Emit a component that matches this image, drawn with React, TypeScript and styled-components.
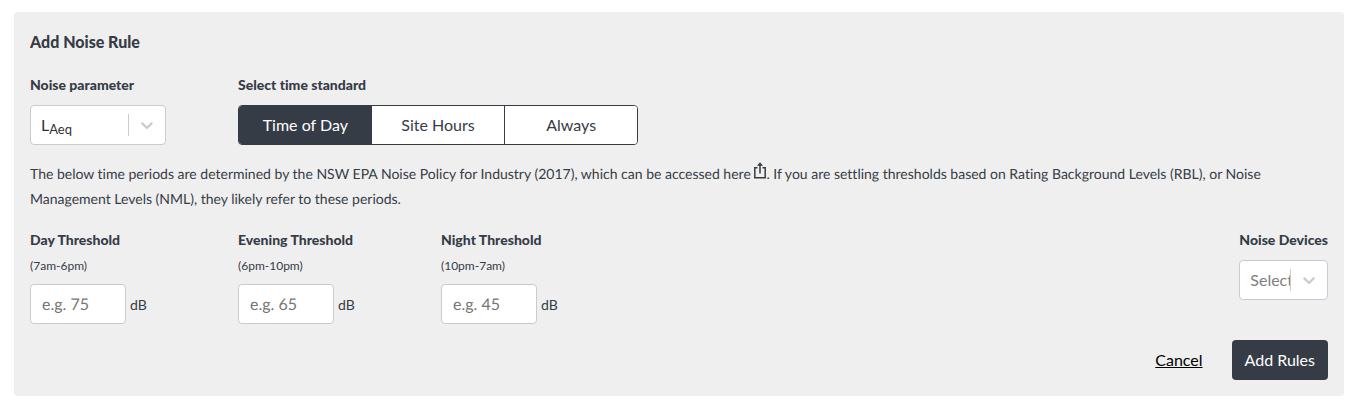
import React from "react";
import styled, { createGlobalStyle, css } from "styled-components";

const ink = "#363c46";
const line = "#c5ccd6";

const GlobalStyle = createGlobalStyle`
  *, *::before, *::after { box-sizing: border-box; }
  body {
    margin: 0;
    background: #fff;
    color: ${ink};
    font-family: Lato, "Liberation Sans", sans-serif;
    font-size: 14px;
    line-height: 25px;
    font-variant-ligatures: none;
  }
  button, input, select {
    font: inherit;
    font-size: 16px;
    line-height: 24px;
    font-variant-ligatures: none;
  }
`;

const Panel = styled.form`
  display: flex;
  flex-direction: column;
  gap: 16px;
  margin: 12px 12px 12px 14px;
  padding: 16px;
  background: #efefef;
  border-radius: 4px;
`;

const Title = styled.h2`
  margin: 0;
  font-size: 16px;
  font-weight: 900;
  line-height: 28px;
`;

const Row = styled.div`
  display: grid;
  grid-template-columns: 208px 203px 1fr auto;
`;

const Field = styled.div`
  display: flex;
  flex-direction: column;
  align-items: flex-start;
`;

const labelStyle = css`
  font-size: 14px;
  font-weight: 900;
  line-height: 25px;
`;

const Label = styled.label`
  ${labelStyle}
`;

const Group = styled.fieldset`
  grid-column: span 3;
  min-width: 0;
  margin: 0;
  padding: 0;
  border: 0;
`;

const Legend = styled.legend`
  ${labelStyle}
  padding: 0;
`;

const Hint = styled.span`
  margin-bottom: 4px;
  font-size: 12px;
  line-height: 28px;
`;

const SelectBox = styled.div<{ $minWidth: string }>`
  display: grid;
  grid-template-columns: minmax(0, 1fr) 1px 36px;
  align-items: center;
  width: 0;
  min-width: ${({ $minWidth }) => $minWidth};
  height: 40px;
  margin-top: 8px;
  background: #fff;
  border: 1px solid ${line};
  border-radius: 4px;
`;

const NativeSelect = styled.select<{ $hidden: boolean }>`
  grid-area: 1 / 1 / 2 / 4;
  width: 100%;
  min-width: 0;
  height: 38px;
  padding: 0 37px 0 10px;
  appearance: none;
  background: transparent;
  border: 0;
  border-radius: 4px;
  color: ${({ $hidden }) => ($hidden ? "transparent" : "#808080")};
  text-overflow: clip;
`;

const SelectValue = styled.span`
  grid-area: 1 / 1;
  padding-left: 10px;
  color: #333;
  font-size: 16px;
  line-height: 24px;
  pointer-events: none;

  sub {
    font-size: 13px;
    line-height: 0;
    vertical-align: -3px;
  }
`;

const Divider = styled.span`
  grid-area: 1 / 2;
  height: 22px;
  background: #ccc;
  pointer-events: none;
`;

const Chevron = styled.svg`
  grid-area: 1 / 3;
  justify-self: center;
  fill: #ccc;
  pointer-events: none;
`;

const Segments = styled.div`
  display: grid;
  grid-template-columns: repeat(3, 1fr);
  width: 400px;
  max-width: 100%;
  height: 40px;
  margin-top: 8px;
  overflow: hidden;
  background: #fff;
  border: 1px solid ${ink};
  border-radius: 4px;
`;

const Segment = styled.button<{ $active: boolean }>`
  padding: 0;
  border: 0;
  background: ${({ $active }) => ($active ? ink : "#fff")};
  color: ${({ $active }) => ($active ? "#fff" : ink)};
  cursor: pointer;

  &[aria-pressed="false"] + & { border-left: 1px solid ${ink}; }
`;

const Note = styled.p`
  margin: 0;
  text-rendering: geometricPrecision;
`;

const NoteLink = styled.a`
  color: inherit;
`;

const ShareIcon = styled.svg`
  vertical-align: baseline;
`;

const InputRow = styled.div`
  display: flex;
  align-items: center;
  gap: 4px;
`;

const NumberInput = styled.input`
  width: 96px;
  height: 40px;
  padding: 0 11px;
  background: #fff;
  border: 1px solid ${line};
  border-radius: 4px;
  color: ${ink};
  text-rendering: geometricPrecision;

  &::placeholder { color: #757575; opacity: 1; }
`;

const Actions = styled.div`
  display: flex;
  justify-content: flex-end;
  gap: 16px;
`;

const ActionButton = styled.button<{ $primary?: boolean }>`
  height: 40px;
  padding: 0 13px;
  border: 0;
  border-radius: 4px;
  cursor: pointer;
  background: ${({ $primary }) => ($primary ? ink : "transparent")};
  color: ${({ $primary }) => ($primary ? "#fff" : "#000")};
  text-decoration: ${({ $primary }) => ($primary ? "none" : "underline")};
`;

type DropDownProps = {
  id: string;
  minWidth: string;
  options: string[];
  value?: React.ReactNode;
};

function DropDown({ id, minWidth, options, value }: DropDownProps) {
  return (
    <SelectBox $minWidth={minWidth}>
      {value && <SelectValue aria-hidden="true">{value}</SelectValue>}
      <Divider />
      <Chevron width="20" height="20" viewBox="0 0 20 20" aria-hidden="true">
        <path d="M4.516 7.548c0.436-0.446 1.043-0.481 1.576 0l3.908 3.747 3.908-3.747c0.533-0.481 1.141-0.446 1.574 0 0.436 0.445 0.408 1.197 0 1.615-0.406 0.418-4.695 4.502-4.695 4.502-0.217 0.223-0.502 0.335-0.787 0.335s-0.57-0.112-0.789-0.335c0 0-4.287-4.084-4.695-4.502s-0.436-1.17 0-1.615z" />
      </Chevron>
      <NativeSelect id={id} $hidden={Boolean(value)}>
        {options.map((option) => (
          <option key={option}>{option}</option>
        ))}
      </NativeSelect>
    </SelectBox>
  );
}

const standards = ["Time of Day", "Site Hours", "Always"];

const thresholds = [
  { id: "day", label: "Day Threshold", hours: "(7am-6pm)", example: "e.g. 75" },
  { id: "evening", label: "Evening Threshold", hours: "(6pm-10pm)", example: "e.g. 65" },
  { id: "night", label: "Night Threshold", hours: "(10pm-7am)", example: "e.g. 45" },
];

export default function App() {
  const [standard, setStandard] = React.useState(standards[0]);

  return (
    <>
      <GlobalStyle />
      <Panel onSubmit={(event) => event.preventDefault()}>
        <Title>Add Noise Rule</Title>
        <Row>
          <Field>
            <Label htmlFor="parameter">Noise parameter</Label>
            <DropDown
              id="parameter"
              minWidth="136px"
              options={["LAeq"]}
              value={<>L<sub>Aeq</sub></>}
            />
          </Field>
          <Group>
            <Legend>Select time standard</Legend>
            <Segments>
              {standards.map((name) => (
                <Segment
                  key={name}
                  type="button"
                  $active={name === standard}
                  aria-pressed={name === standard}
                  onClick={() => setStandard(name)}
                >
                  {name}
                </Segment>
              ))}
            </Segments>
          </Group>
        </Row>
        <Note>
          The below time periods are determined by the NSW EPA Noise Policy for Industry (2017),
          which can be accessed here{" "}
          <NoteLink href="#policy" aria-label="Noise Policy for Industry">
            <ShareIcon width="12" height="17" viewBox="0 0 12 17" fill="none" stroke={ink} aria-hidden="true">
              <path d="M3.500 5.700H0.800V15.700H11.200V5.700H8.500M6 11.500V2" strokeWidth="1.500" />
              <path d="M6 0.300L9 3.800H3z" fill={ink} stroke="none" />
            </ShareIcon>
          </NoteLink>
          . If you are settling thresholds based on Rating Background Levels (RBL), or Noise
          Management Levels (NML), they likely refer to these periods.
        </Note>
        <Row>
          {thresholds.map(({ id, label, hours, example }) => (
            <Field key={id}>
              <Label htmlFor={id}>{label}</Label>
              <Hint id={`${id}-hours`}>{hours}</Hint>
              <InputRow>
                <NumberInput
                  id={id}
                  inputMode="decimal"
                  placeholder={example}
                  aria-describedby={`${id}-hours`}
                />
                <span>dB</span>
              </InputRow>
            </Field>
          ))}
          <Field>
            <Label htmlFor="devices">Noise Devices</Label>
            <DropDown id="devices" minWidth="100%" options={["Select..."]} />
          </Field>
        </Row>
        <Actions>
          <ActionButton type="button">Cancel</ActionButton>
          <ActionButton type="submit" $primary>Add Rules</ActionButton>
        </Actions>
      </Panel>
    </>
  );
}
